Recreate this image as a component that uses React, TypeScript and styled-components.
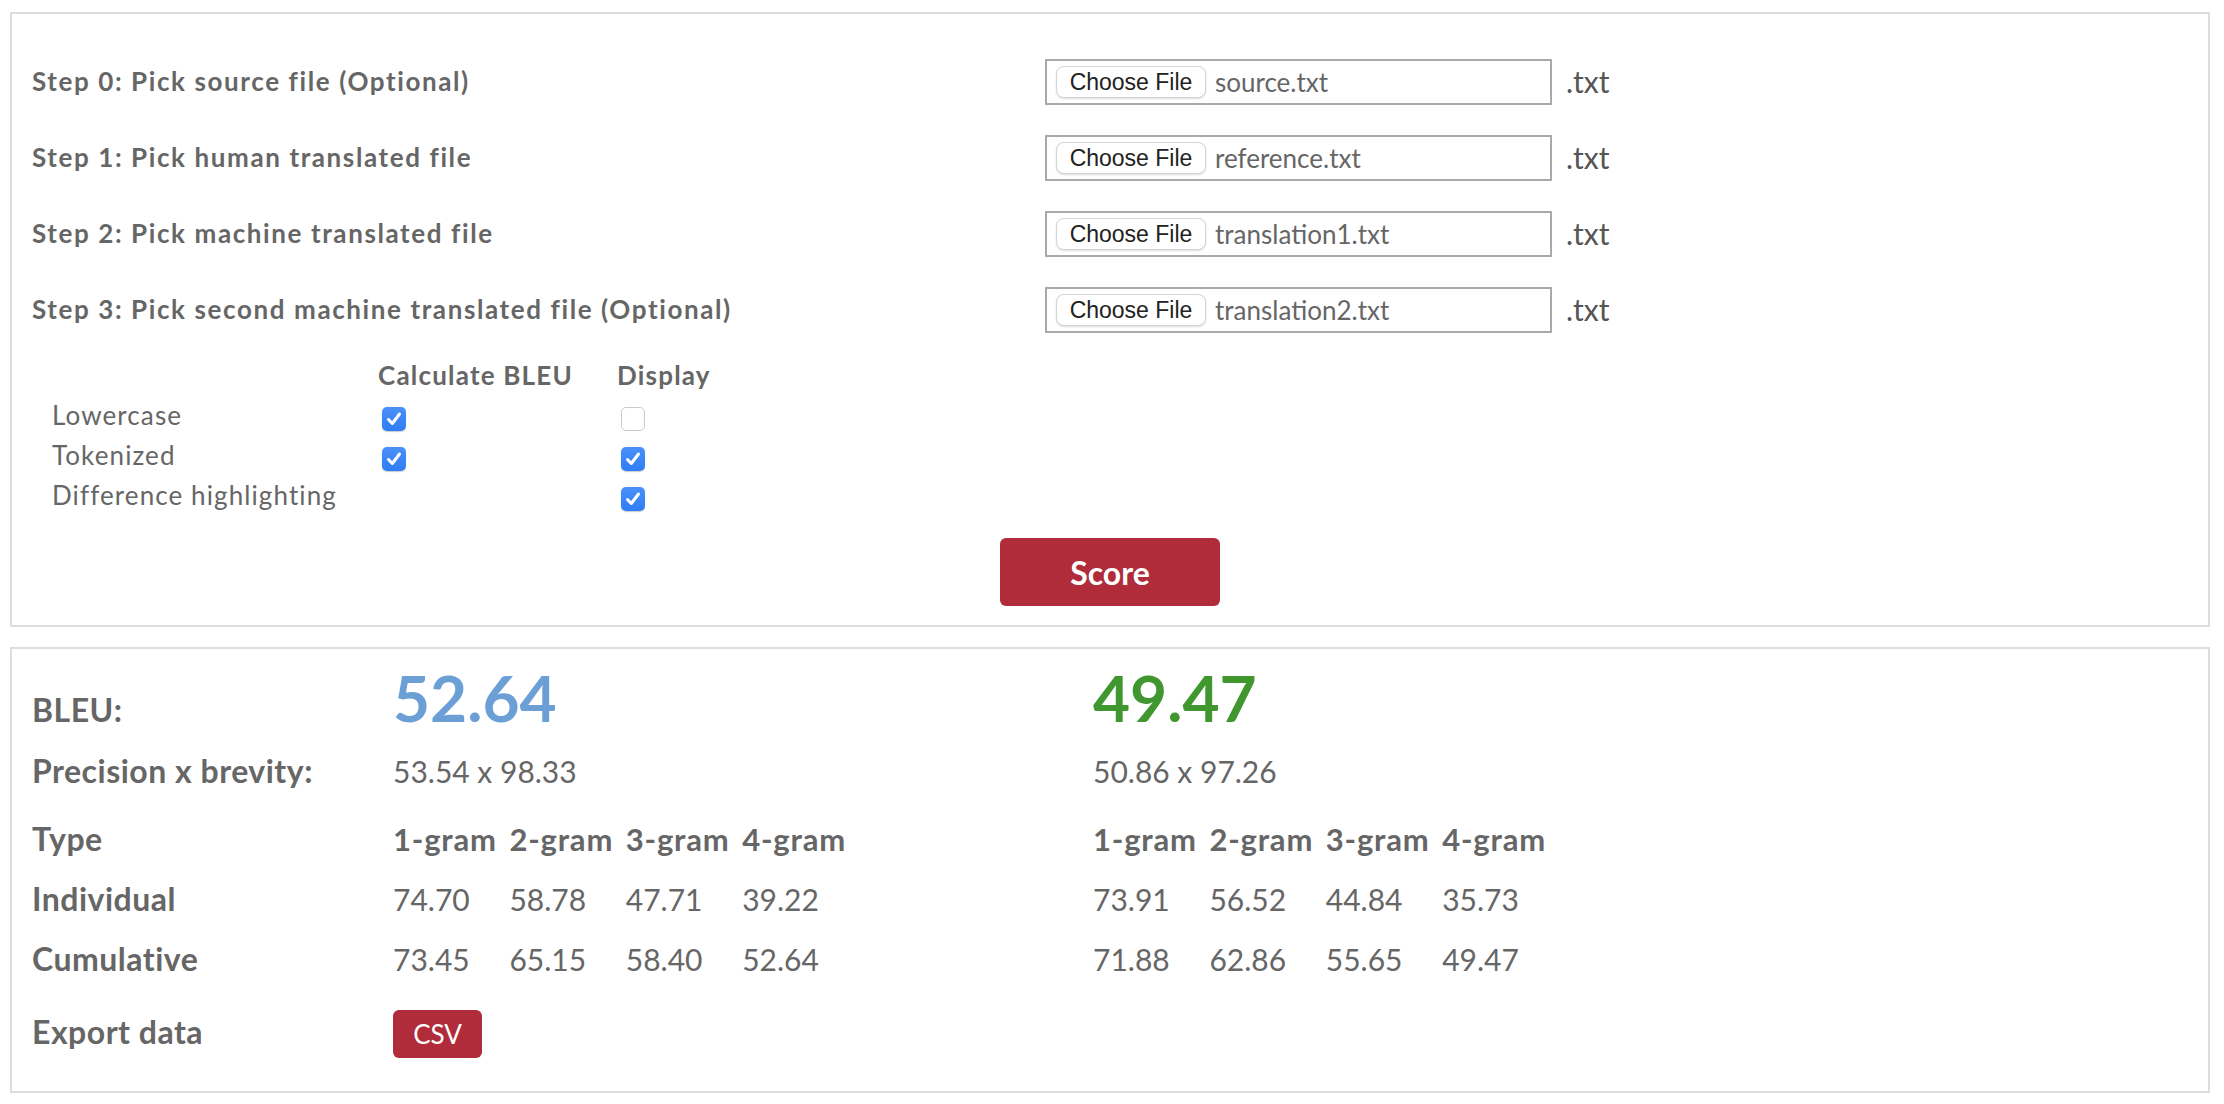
import React from "react";
import styled, { createGlobalStyle } from "styled-components";

const GlobalStyle = createGlobalStyle`
  html, body { margin: 0; padding: 0; background: #ffffff; }
  body { font-family: Lato, "Open Sans", "Noto Sans", sans-serif; color: #666666; }
  * { box-sizing: border-box; }
`;

const RED = "#b02c3b";

const Page = styled.div`
  width: 2224px;
  display: flex;
  flex-direction: column;
  gap: 20px;
  padding: 12px 14px 0 10px;
`;

const Panel = styled.section<{ $pt: number; $pb: number }>`
  border: 2px solid #dddddd;
  padding: ${(p) => p.$pt}px 20px ${(p) => p.$pb}px 20px;
`;

/* ---------- file steps ---------- */
const StepRow = styled.div`
  display: grid;
  grid-template-columns: 999px 507px auto;
  column-gap: 14px;
  height: 76px;
  align-items: center;
`;

const StepLabel = styled.div`
  font-size: 26px;
  font-weight: 700;
  letter-spacing: 1.6px;
  color: #666666;
  padding-bottom: 3px;
`;

const FileBox = styled.div`
  height: 46px;
  border: 2px solid #a9a9a9;
  display: flex;
  align-items: center;
  padding-left: 9px;
`;

const ChooseButton = styled.button`
  width: 150px;
  height: 32px;
  padding: 0;
  border: 1px solid #d4d4d4;
  border-radius: 8px;
  background: #ffffff;
  box-shadow: 0 1px 2px rgba(0, 0, 0, 0.14);
  font-family: "Liberation Sans", Arial, sans-serif;
  font-size: 23px;
  color: #222222;
  display: flex;
  align-items: center;
  justify-content: center;
`;

const FileName = styled.span`
  margin-left: 9px;
  font-size: 26px;
  color: #666666;
`;

const Ext = styled.span`
  font-size: 30px;
  color: #555555;
  padding-bottom: 2px;
`;

/* ---------- options ---------- */
const OptionsGrid = styled.div`
  margin-top: 7px;
  padding-left: 20px;
  display: grid;
  grid-template-columns: 326px 239px auto;
  grid-auto-rows: 40px;
`;

const OptHead = styled.div`
  font-size: 26px;
  font-weight: 700;
  letter-spacing: 1.2px;
  line-height: 40px;
  color: #666666;
`;

const OptLabel = styled.div`
  font-size: 26px;
  letter-spacing: 1.1px;
  line-height: 40px;
  color: #666666;
`;

const OptCell = styled.div`
  padding-top: 12px;
  padding-left: 4px;
`;

const CheckBoxShape = styled.span<{ $checked: boolean }>`
  width: 24px;
  height: 24px;
  border-radius: 5px;
  display: flex;
  align-items: center;
  justify-content: center;
  background: ${(p) => (p.$checked ? "linear-gradient(#4a90f8, #2f7df5)" : "#ffffff")};
  border: ${(p) => (p.$checked ? "none" : "1.5px solid #cbcbcb")};
  box-shadow: ${(p) => (p.$checked ? "0 0.5px 1px rgba(0,0,0,0.2)" : "none")};
`;

const Checkbox = ({ checked }: { checked: boolean }) => (
  <CheckBoxShape $checked={checked}>
    {checked && (
      <svg width="24" height="24" viewBox="0 0 24 24">
        <path d="M6.5 12.5 L10.3 16.5 L17.5 7" fill="none" stroke="#fff" strokeWidth="3" strokeLinecap="round" strokeLinejoin="round" />
      </svg>
    )}
  </CheckBoxShape>
);

const ScoreButton = styled.button`
  display: block;
  margin: 23px auto 0;
  width: 220px;
  height: 68px;
  border: none;
  border-radius: 6px;
  background: ${RED};
  color: #ffffff;
  font-family: Lato, sans-serif;
  font-size: 32px;
  font-weight: 700;
`;

/* ---------- results ---------- */
const ResultRow = styled.div<{ $lh: number; $mt?: number }>`
  display: grid;
  grid-template-columns: 361px 700px 1fr;
  align-items: baseline;
  line-height: ${(p) => p.$lh}px;
  margin-top: ${(p) => p.$mt ?? 0}px;
`;

const RowLabel = styled.div`
  font-size: 32px;
  font-weight: 700;
  letter-spacing: 0.5px;
  color: #666666;
`;

const BigScore = styled.div<{ $color: string }>`
  font-size: 64px;
  font-weight: 700;
  color: ${(p) => p.$color};
`;

const Value = styled.div`
  font-size: 30px;
  color: #666666;
`;

const NGrid = styled.div`
  display: grid;
  grid-template-columns: repeat(4, 116.4px);
  align-items: baseline;
`;

const NHead = styled.div`
  font-size: 31px;
  font-weight: 700;
  letter-spacing: 0.8px;
  color: #666666;
`;

const CsvButton = styled.button`
  width: 89px;
  height: 48px;
  padding: 0;
  border: none;
  border-radius: 6px;
  background: ${RED};
  color: #ffffff;
  font-family: Lato, sans-serif;
  font-size: 26px;
  line-height: 48px;
  justify-self: start;
`;

const steps = [
  { label: "Step 0: Pick source file (Optional)", file: "source.txt" },
  { label: "Step 1: Pick human translated file", file: "reference.txt" },
  { label: "Step 2: Pick machine translated file", file: "translation1.txt" },
  { label: "Step 3: Pick second machine translated file (Optional)", file: "translation2.txt" },
];

const options: { label: string; bleu: boolean | null; display: boolean }[] = [
  { label: "Lowercase", bleu: true, display: false },
  { label: "Tokenized", bleu: true, display: true },
  { label: "Difference highlighting", bleu: null, display: true },
];

const models = [
  {
    bleu: "52.64",
    color: "#6b9fd6",
    pb: "53.54 x 98.33",
    individual: ["74.70", "58.78", "47.71", "39.22"],
    cumulative: ["73.45", "65.15", "58.40", "52.64"],
  },
  {
    bleu: "49.47",
    color: "#41972f",
    pb: "50.86 x 97.26",
    individual: ["73.91", "56.52", "44.84", "35.73"],
    cumulative: ["71.88", "62.86", "55.65", "49.47"],
  },
];

const grams = ["1-gram", "2-gram", "3-gram", "4-gram"];

export default function App() {
  return (
    <>
      <GlobalStyle />
      <Page>
        <Panel $pt={30} $pb={19}>
          {steps.map((s) => (
            <StepRow key={s.label}>
              <StepLabel>{s.label}</StepLabel>
              <FileBox>
                <ChooseButton type="button">Choose File</ChooseButton>
                <FileName>{s.file}</FileName>
              </FileBox>
              <Ext>.txt</Ext>
            </StepRow>
          ))}
          <OptionsGrid>
            <div />
            <OptHead>Calculate BLEU</OptHead>
            <OptHead>Display</OptHead>
            {options.map((o) => (
              <React.Fragment key={o.label}>
                <OptLabel>{o.label}</OptLabel>
                <OptCell>{o.bleu !== null && <Checkbox checked={o.bleu} />}</OptCell>
                <OptCell>
                  <Checkbox checked={o.display} />
                </OptCell>
              </React.Fragment>
            ))}
          </OptionsGrid>
          <ScoreButton type="button">Score</ScoreButton>
        </Panel>

        <Panel $pt={17} $pb={29}>
          <ResultRow $lh={63}>
            <RowLabel>BLEU:</RowLabel>
            {models.map((m) => (
              <BigScore key={m.bleu} $color={m.color}>
                {m.bleu}
              </BigScore>
            ))}
          </ResultRow>
          <ResultRow $lh={60}>
            <RowLabel>Precision x brevity:</RowLabel>
            {models.map((m) => (
              <Value key={m.pb}>{m.pb}</Value>
            ))}
          </ResultRow>
          <ResultRow $lh={60} $mt={8}>
            <RowLabel>Type</RowLabel>
            {models.map((m) => (
              <NGrid key={m.bleu}>
                {grams.map((g) => (
                  <NHead key={g}>{g}</NHead>
                ))}
              </NGrid>
            ))}
          </ResultRow>
          <ResultRow $lh={60}>
            <RowLabel>Individual</RowLabel>
            {models.map((m) => (
              <NGrid key={m.bleu}>
                {m.individual.map((v, i) => (
                  <Value key={i}>{v}</Value>
                ))}
              </NGrid>
            ))}
          </ResultRow>
          <ResultRow $lh={60}>
            <RowLabel>Cumulative</RowLabel>
            {models.map((m) => (
              <NGrid key={m.bleu}>
                {m.cumulative.map((v, i) => (
                  <Value key={i}>{v}</Value>
                ))}
              </NGrid>
            ))}
          </ResultRow>
          <ResultRow $lh={60} $mt={13}>
            <RowLabel>Export data</RowLabel>
            <CsvButton type="button">CSV</CsvButton>
          </ResultRow>
        </Panel>
      </Page>
    </>
  );
}
